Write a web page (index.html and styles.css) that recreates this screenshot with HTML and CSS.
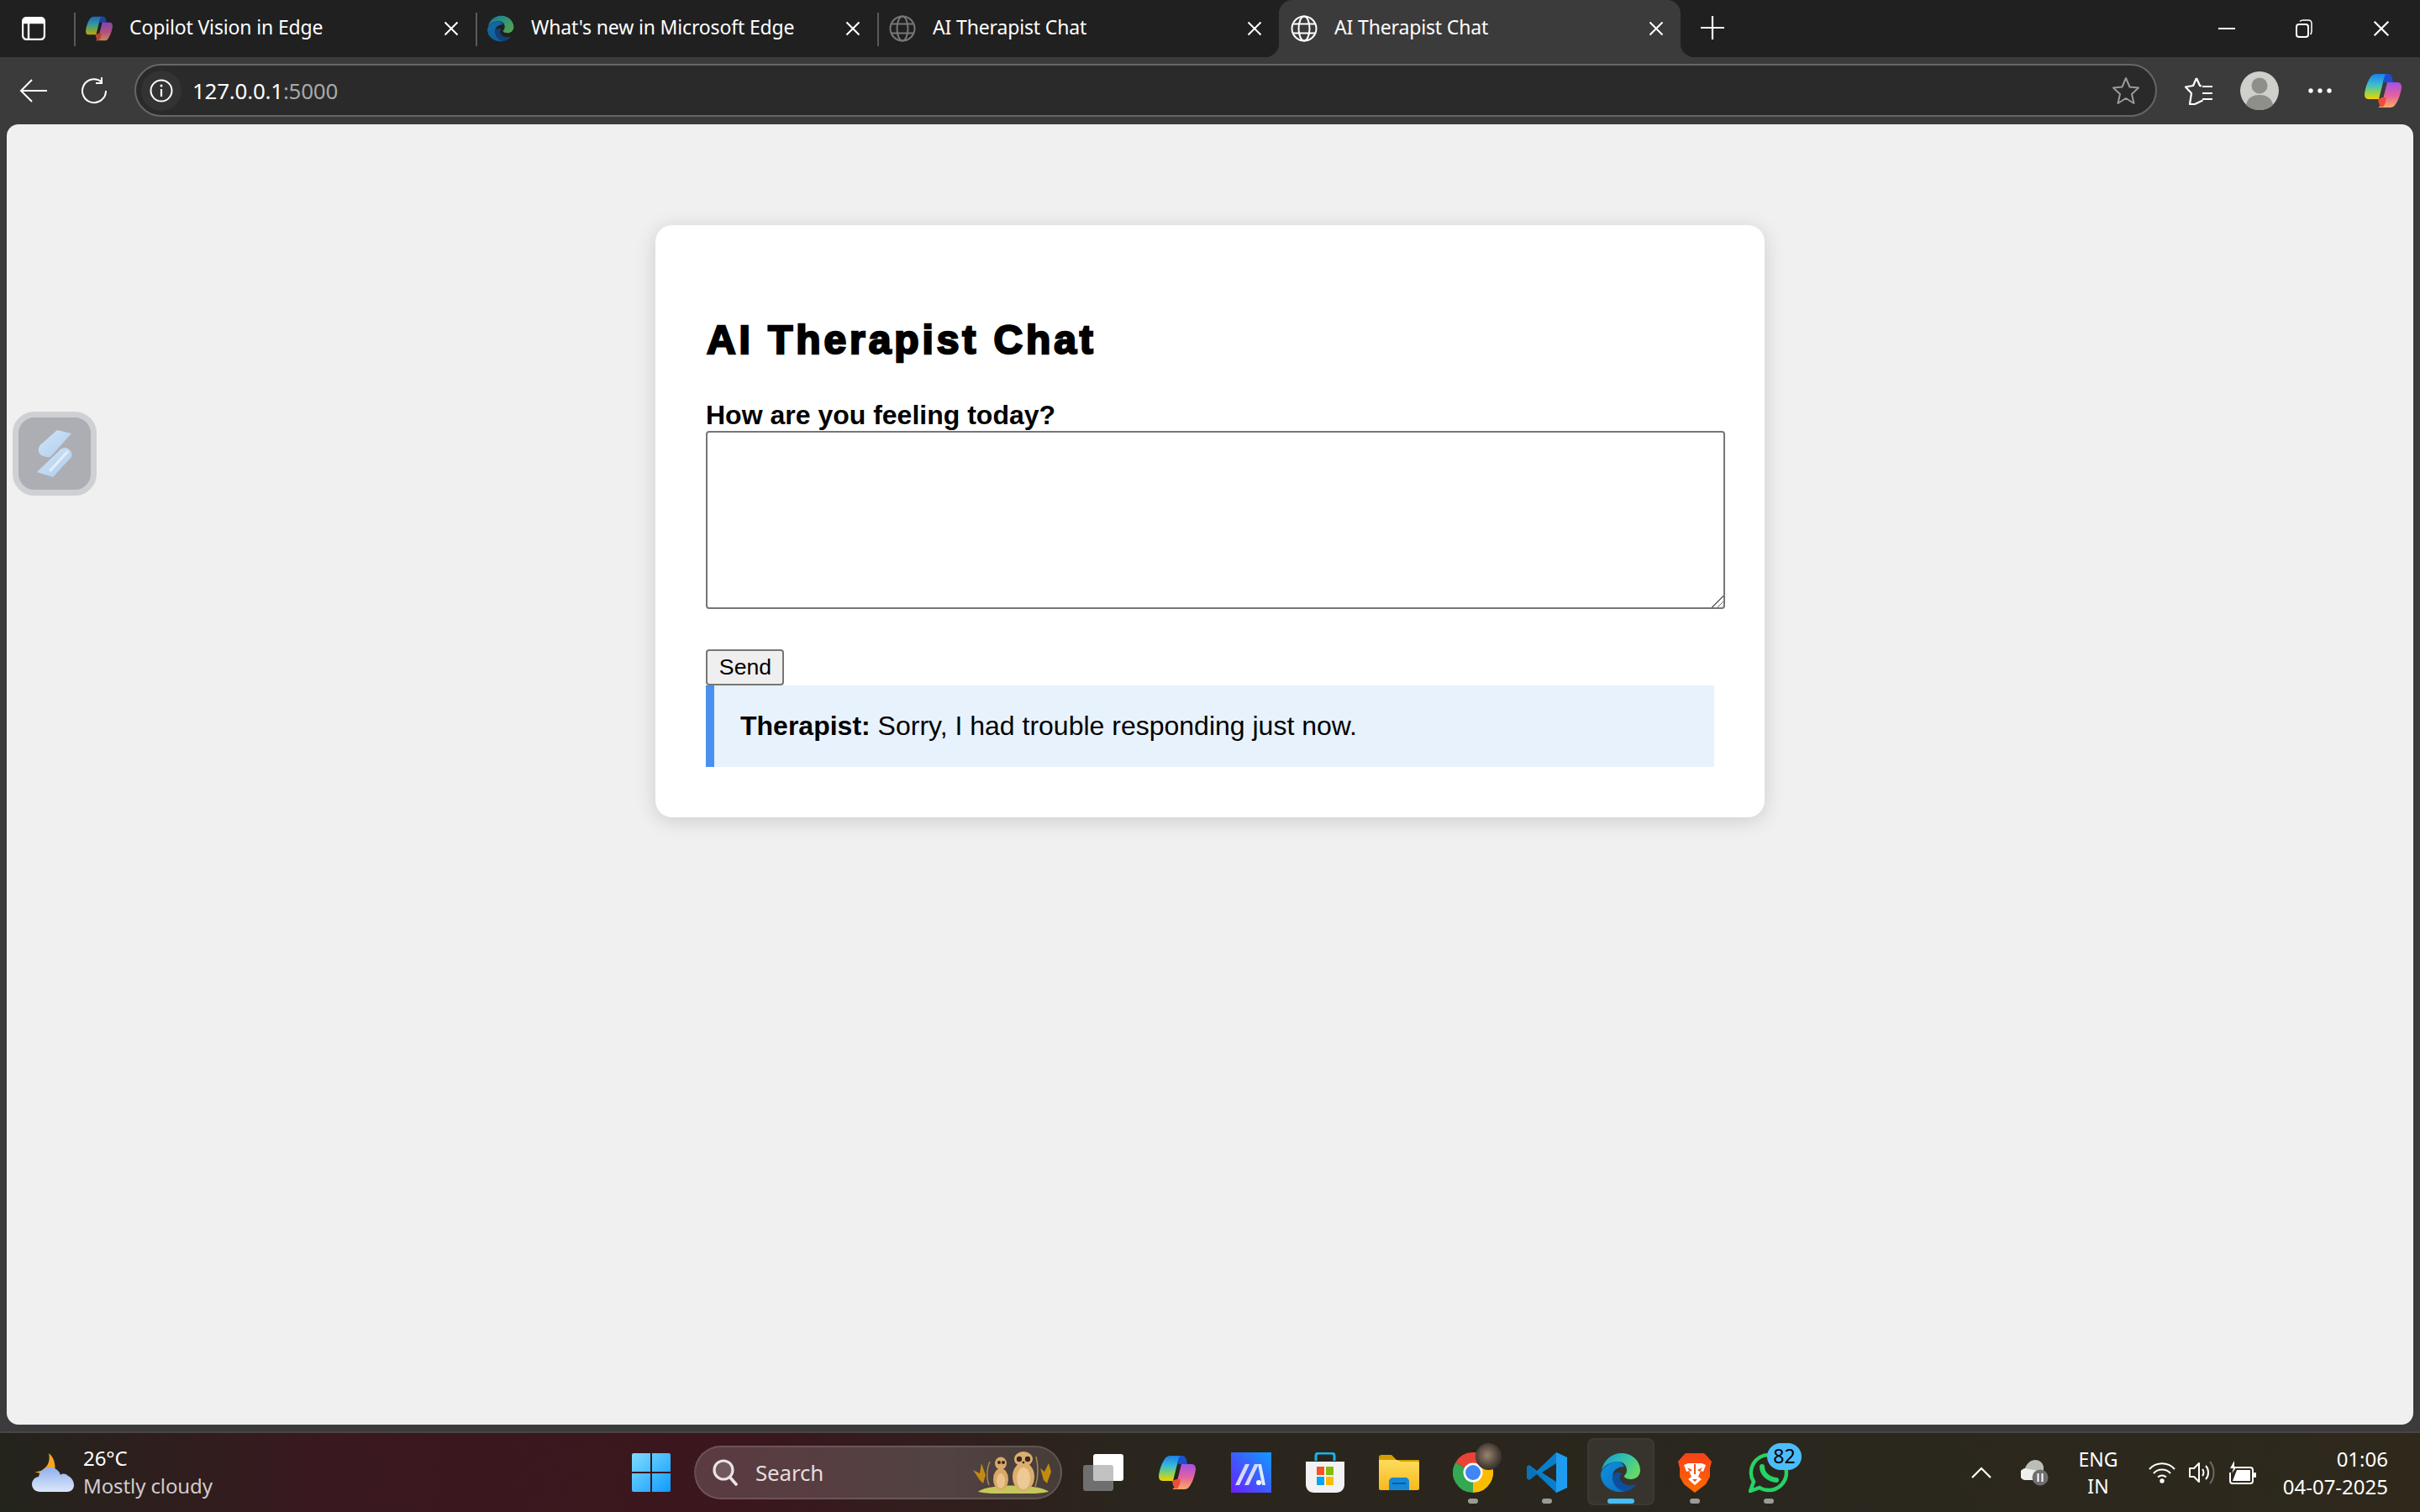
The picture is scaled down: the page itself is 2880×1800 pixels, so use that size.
FILE: index.html
```html
<!DOCTYPE html>
<html>
    <head>
        <meta charset="UTF-8">
        <title>AI Therapist Chat</title>
        <link rel="stylesheet" href="styles.css">
    </head>
    <body>
        <svg class="defs" width="0" height="0">
            <defs>
                <linearGradient id="copL" x1="0" y1="0" x2="0" y2="1">
                    <stop offset="0" stop-color="#1d7fe6"/><stop offset=".4" stop-color="#38b9d8"/><stop offset=".7" stop-color="#86d25c"/><stop offset="1" stop-color="#f7d000"/>
                </linearGradient>
                <linearGradient id="copR" x1="0" y1="0" x2="0" y2="1">
                    <stop offset="0" stop-color="#a252e6"/><stop offset=".5" stop-color="#e2609f"/><stop offset="1" stop-color="#fbab62"/>
                </linearGradient>
                <linearGradient id="edgeTop" x1="0" y1="0" x2="1" y2=".5">
                    <stop offset="0" stop-color="#1398d8"/><stop offset=".55" stop-color="#2fc0b0"/><stop offset="1" stop-color="#62d868"/>
                </linearGradient>
                <linearGradient id="edgeMid" x1="0" y1="0" x2="1" y2="1">
                    <stop offset="0" stop-color="#0e8fdc"/><stop offset="1" stop-color="#0b6fc4"/>
                </linearGradient>
                <linearGradient id="maBg" x1="1" y1="0" x2="0" y2="1">
                    <stop offset="0" stop-color="#0f9bff"/><stop offset="1" stop-color="#6a1fff"/>
                </linearGradient>
                <linearGradient id="winBlue" x1="0" y1="0" x2="1" y2="1">
                    <stop offset="0" stop-color="#7fdcff"/><stop offset="1" stop-color="#0f9bff"/>
                </linearGradient>
                <linearGradient id="braveBg" x1="0" y1="0" x2="0" y2="1">
                    <stop offset="0" stop-color="#f8401a"/><stop offset="1" stop-color="#ff6a00"/>
                </linearGradient>
                <linearGradient id="cloud" x1="0" y1="0" x2="0" y2="1">
                    <stop offset="0" stop-color="#8fb0ee"/><stop offset="1" stop-color="#dce8fa"/>
                </linearGradient>
                <linearGradient id="folder" x1="0" y1="0" x2="0" y2="1">
                    <stop offset="0" stop-color="#ffdc5c"/><stop offset="1" stop-color="#f6b81e"/>
                </linearGradient>
                <linearGradient id="slash" x1="0" y1="0" x2="1" y2="1">
                    <stop offset="0" stop-color="#d5e5f5"/><stop offset="1" stop-color="#a9cdf0"/>
                </linearGradient>
                <symbol id="copilot" viewBox="0 0 44 40">
                    <path fill="url(#copL)" d="M14 0H28C24 2 23 6 22 10L17 30H5C1 30 0 27 0 24C1 16 4 8 7 4C9 1 11 0 14 0Z"/>
                    <path fill="#1a4fd0" d="M26 0H28C31 0 32 2 33 5L34 10H22C23 5 24 1 26 0Z"/>
                    <path fill="url(#copR)" d="M27 10H39C43 10 44 13 44 16C43 24 40 32 37 36C35 39 33 40 30 40H16C20 38 21 34 22 30Z"/>
                    <path fill="#e8503c" d="M17 28H22C21 34 20 38 17 39.5C14 39 13 36 12 30Z" transform="translate(4 0)"/>
                </symbol>
                <symbol id="edge" viewBox="0 0 48 48">
                    <path fill="url(#edgeTop)" d="M1 22C3 9 13 1 25 1C38 1 47 11 47 21C47 28 42 32 36 32C32 32 29 31 28 29C27 27 31 27 31 21C31 15 26 11 21 11C12 11 4 15 1 22Z"/>
                    <path fill="url(#edgeMid)" d="M21 11C10 11 1 19 0 26C0 39 12 47 23 47C27 47 30 46 33 45C22 47 14 39 14 29C14 20 22 17 28 17C26 13 24 11 21 11Z"/>
                    <path fill="#0d4f9e" d="M14 29C14 39 22 47 31 46C36 45 40 42 42 38C36 40 30 40 26 36C22 33 22 28 25 25C20 23 14 24 14 29Z"/>
                </symbol>
                <symbol id="globe" viewBox="0 0 32 32">
                    <g fill="none" stroke="currentColor" stroke-width="2">
                        <circle cx="16" cy="16" r="14.5"/><ellipse cx="16" cy="16" rx="6.5" ry="14.5"/><path d="M3 10.5H29M3 21.5H29"/>
                    </g>
                </symbol>
                <symbol id="x" viewBox="0 0 18 18">
                    <path d="M1.5 1.5L16.5 16.5M16.5 1.5L1.5 16.5" fill="none" stroke="currentColor" stroke-width="2"/>
                </symbol>
            </defs>
        </svg>

        <div class="window">
            <!-- tab strip -->
            <div class="tabstrip">
                <div class="tabs-menu">
                    <svg width="28" height="28" viewBox="0 0 28 28"><rect x="1" y="1" width="26" height="26" rx="5" fill="none" stroke="#fff" stroke-width="2.4"/><path d="M1 7H27M8 7V27" fill="none" stroke="#fff" stroke-width="2.4"/><rect x="1" y="1" width="26" height="6" rx="3" fill="#fff"/></svg>
                </div>
                <div class="tab">
                    <svg class="favicon" viewBox="0 0 44 40"><use href="#copilot" opacity=".75"/></svg>
                    <span class="tab-title">Copilot Vision in Edge</span>
                    <svg class="tab-close"><use href="#x"/></svg>
                </div>
                <div class="tab">
                    <svg class="favicon" viewBox="0 0 48 48"><use href="#edge" opacity=".7"/></svg>
                    <span class="tab-title">What's new in Microsoft Edge</span>
                    <svg class="tab-close"><use href="#x"/></svg>
                </div>
                <div class="tab tab-before-active">
                    <svg class="favicon favicon-dim"><use href="#globe"/></svg>
                    <span class="tab-title">AI Therapist Chat</span>
                    <svg class="tab-close"><use href="#x"/></svg>
                </div>
                <div class="tab tab-active">
                    <svg class="favicon"><use href="#globe"/></svg>
                    <span class="tab-title">AI Therapist Chat</span>
                    <svg class="tab-close"><use href="#x"/></svg>
                </div>
                <div class="new-tab">
                    <svg width="28" height="28" viewBox="0 0 28 28"><path d="M14 0V28M0 14H28" stroke="#fff" stroke-width="2.2"/></svg>
                </div>
                <div class="win-controls">
                    <div class="win-btn"><svg width="20" height="20" viewBox="0 0 20 20"><path d="M0 10H20" stroke="#fff" stroke-width="2"/></svg></div>
                    <div class="win-btn"><svg width="20" height="22" viewBox="0 0 20 22"><rect x="1" y="6" width="14" height="15" rx="3" fill="none" stroke="#fff" stroke-width="2"/><path d="M5 2.5C6 1.5 7 1 9 1H15C17.500 1 19 2.500 19 5V14C19 16 18.500 17 17.500 18" fill="none" stroke="#fff" stroke-width="1.500"/></svg></div>
                    <div class="win-btn"><svg width="20" height="22"><use href="#x"/></svg></div>
                </div>
            </div>

            <!-- address bar -->
            <div class="toolbar">
                <div class="nav-btn nav-back">
                    <svg width="34" height="28" viewBox="0 0 34 28"><path d="M33 14H2M15 1L2 14L15 27" fill="none" stroke="#fff" stroke-width="2"/></svg>
                </div>
                <div class="nav-btn nav-reload">
                    <svg width="32" height="32" viewBox="0 0 32 32"><path d="M25 5.500A14 14 0 1 0 30 16" fill="none" stroke="#fff" stroke-width="2"/><path d="M25 0V7H18" fill="none" stroke="#fff" stroke-width="2"/></svg>
                </div>
                <div class="address">
                    <div class="site-info">
                        <svg width="28" height="28" viewBox="0 0 28 28"><circle cx="14" cy="14" r="12.500" fill="none" stroke="#fff" stroke-width="2"/><path d="M14 12V21" stroke="#fff" stroke-width="2.200"/><circle cx="14" cy="8" r="1.500" fill="#fff"/></svg>
                    </div>
                    <span class="url">127.0.0.1<span class="url-port">:5000</span></span>
                    <svg class="fav-star" width="34" height="34" viewBox="0 0 34 34"><path d="M17 2L21.500 12.500L32 13.500L24 21L26.500 32L17 26L7.500 32L10 21L2 13.500L12.500 12.500Z" fill="none" stroke="#9a9a9a" stroke-width="2" stroke-linejoin="round"/></svg>
                </div>
                <div class="tool-btn">
                    <svg width="34" height="34" viewBox="0 0 34 34"><path d="M14 2L18 11L20 11.500M12 33L21.500 28.500M14 2L10 11L1 12.500L8 20L6 33L12 33" fill="none" stroke="#fff" stroke-width="2.200" stroke-linejoin="round"/><path d="M21 12H33M21 20H33M21 27H33" stroke="#fff" stroke-width="2.200"/></svg>
                </div>
                <div class="tool-btn">
                    <svg width="46" height="46" viewBox="0 0 46 46"><circle cx="23" cy="23" r="23" fill="#cfcfcb"/><circle cx="23" cy="17" r="9.500" fill="#8e8e8a"/><path d="M7 40C9 31 15 28 23 28C31 28 37 31 39 40C35 44 29 46 23 46C17 46 11 44 7 40Z" fill="#8e8e8a"/></svg>
                </div>
                <div class="tool-btn">
                    <svg width="28" height="6" viewBox="0 0 28 6"><circle cx="3" cy="3" r="2.700" fill="#fff"/><circle cx="14" cy="3" r="2.700" fill="#fff"/><circle cx="25" cy="3" r="2.700" fill="#fff"/></svg>
                </div>
                <div class="tool-btn tool-copilot">
                    <svg width="44" height="40"><use href="#copilot"/></svg>
                </div>
            </div>

            <!-- page content -->
            <div class="viewport">
                <div class="side-widget">
                    <svg width="42" height="56" viewBox="0 0 42 56"><path d="M24 0L41 4L16 32C10 33 0 30 2 22C2 20 4 17 6 16Z" fill="url(#slash)"/><path d="M28 23C33 20 38 21 40 25C42 28 42 30 41 32L19 56L0 50Z" fill="url(#slash)"/><path d="M37 25L15 49" stroke="#e6eef8" stroke-width="3"/></svg>
                </div>
                <div class="card">
                    <h1>AI Therapist Chat</h1>
                    <label class="feeling-label" for="feeling">How are you feeling today?</label>
                    <textarea id="feeling" class="feeling-input"></textarea>
                    <button class="send-btn">Send</button>
                    <div class="response"><strong>Therapist:</strong> Sorry, I had trouble responding just now.</div>
                </div>
            </div>
            <div class="viewport-foot"></div>

            <!-- windows taskbar -->
            <div class="taskbar">
                <div class="weather">
                    <svg width="50" height="46" viewBox="0 0 50 46"><path d="M20 0C28 6 29 18 26 28L2 22C8 23 15 20 19 13C21 9 21 4 20 0Z" fill="#f5a623"/><path d="M10 46C4 46 0 42 0 37C0 32 4 28 8 28C9 22 14 17 21 17C28 17 33 21 34 26C36 24 40 24 43 27C47 29 50 33 50 38C50 43 46 46 42 46Z" fill="url(#cloud)"/></svg>
                    <div class="weather-text">
                        <span class="weather-temp">26°C</span>
                        <span class="weather-desc">Mostly cloudy</span>
                    </div>
                </div>
                <div class="task-center">
                    <div class="task-item">
                        <svg width="46" height="46" viewBox="0 0 46 46"><path d="M2 0H22V22H0V2A2 2 0 0 1 2 0ZM24 0H44A2 2 0 0 1 46 2V22H24ZM0 24H22V46H2A2 2 0 0 1 0 44ZM24 24H46V44A2 2 0 0 1 44 46H24Z" fill="url(#winBlue)"/></svg>
                    </div>
                    <div class="search">
                        <svg width="30" height="32" viewBox="0 0 30 32"><circle cx="13" cy="13" r="11" fill="rgba(255,255,255,.15)" stroke="#e8e4e6" stroke-width="3.200"/><path d="M21 22L28 30" stroke="#e8e4e6" stroke-width="3.600" stroke-linecap="round"/></svg>
                        <span class="search-text">Search</span>
                        <svg class="meerkats" width="96" height="50" viewBox="0 0 96 50">
                            <path d="M6 48C16 38 80 38 90 48C70 52 26 52 6 48Z" fill="#c5c75a"/>
                            <path d="M8 34L0 22L8 26L10 14L15 28L12 38ZM84 34L80 20L85 24L90 14L93 24L88 38Z" fill="#c28a12"/>
                            <path d="M19 40C15 30 17 18 20 12M74 42C78 30 78 18 75 6" fill="none" stroke="#a58a52" stroke-width="1.500"/>
                            <ellipse cx="33" cy="33" rx="9" ry="13" fill="#d9a868"/>
                            <ellipse cx="33" cy="14" rx="7" ry="7.500" fill="#d9a868"/>
                            <ellipse cx="33" cy="35" rx="5" ry="9" fill="#e8c48c"/>
                            <circle cx="31" cy="13" r="2" fill="#3c2620"/><circle cx="36" cy="13" r="2" fill="#3c2620"/>
                            <ellipse cx="60" cy="30" rx="13" ry="17" fill="#dcae6e"/>
                            <ellipse cx="60" cy="32" rx="8" ry="13" fill="#ecca94"/>
                            <ellipse cx="60" cy="9" rx="11" ry="9" fill="#dcae6e"/>
                            <circle cx="55" cy="9" r="3.200" fill="#3c2620"/><circle cx="65" cy="9" r="3.200" fill="#3c2620"/>
                            <circle cx="60" cy="13" r="1.300" fill="#2a1a14"/>
                        </svg>
                    </div>
                    <div class="task-item">
                        <svg width="48" height="44" viewBox="0 0 48 44"><rect x="0" y="13" width="36" height="31" rx="3" fill="#6f6f6f"/><rect x="12" y="0" width="36" height="32" rx="3" fill="#fff"/><path d="M12 13H33A3 3 0 0 1 36 16V32H15A3 3 0 0 1 12 29Z" fill="#c2c2c2"/></svg>
                    </div>
                    <div class="task-item">
                        <svg width="44" height="40"><use href="#copilot"/></svg>
                    </div>
                    <div class="task-item">
                        <svg width="48" height="48" viewBox="0 0 48 48"><rect width="48" height="48" fill="url(#maBg)"/><path d="M5 39L17 14H22L10 39ZM16 39L28 14H33L21 39Z" fill="#d8d8f8"/><path d="M32 14H36L41 39H37Z" fill="#d8ecff"/><circle cx="33" cy="36" r="3" fill="#fff"/></svg>
                    </div>
                    <div class="task-item">
                        <svg width="46" height="48" viewBox="0 0 46 48"><path d="M12 10V4C12 2 13 1 15 1H31C33 1 34 2 34 4V10" fill="none" stroke="#18b4e8" stroke-width="3"/><path d="M0 11H46V38C46 44 42 48 36 48H10C4 48 0 44 0 38Z" fill="#f2f2f2"/><rect x="13" y="17" width="9" height="10" fill="#f35325"/><rect x="24" y="17" width="9" height="10" fill="#81bc06"/><rect x="13" y="29" width="9" height="10" fill="#05a6f0"/><rect x="24" y="29" width="9" height="10" fill="#ffba08"/></svg>
                    </div>
                    <div class="task-item">
                        <svg width="48" height="42" viewBox="0 0 48 42"><path d="M0 3C0 1 1 0 3 0H15L21 6H48V12H0Z" fill="#d89e00"/><path d="M0 6H21L26 8H46C47 8 48 9 48 10V40C48 41 47 42 46 42H2C1 42 0 41 0 40Z" fill="url(#folder)"/><path d="M12 42V32C12 29 14 27 17 27H31C34 27 36 29 36 32V42Z" fill="#1488d8"/><rect x="16" y="33" width="16" height="2" fill="#0a5a9c"/></svg>
                    </div>
                    <div class="task-item task-running">
                        <svg width="48" height="48" viewBox="0 0 48 48"><path d="M24 24L3.200 12A24 24 0 0 1 44.800 12Z" fill="#e94335"/><path d="M24 24L44.800 12A24 24 0 0 1 24 48Z" fill="#fbbc04"/><path d="M24 24L24 48A24 24 0 0 1 3.200 12Z" fill="#34a853"/><circle cx="24" cy="24" r="11.500" fill="#fff"/><circle cx="24" cy="24" r="9" fill="#4285f4"/></svg>
                        <span class="chrome-profile"></span>
                    </div>
                    <div class="task-item task-running">
                        <svg width="48" height="48" viewBox="0 0 48 48"><path d="M35 0L48 6V42L35 48L12 26L3 33L0 31V17L3 15L12 22Z" fill="#0a7ec8"/><path d="M35 0L48 6V42L35 48Z" fill="#1f9cf0"/><path d="M35 13V35L18 24Z" fill="#2a2820"/><path d="M3 15L35 48L12 26L3 33L0 31V17Z" fill="#0868ac" opacity=".5"/></svg>
                    </div>
                    <div class="task-item task-active">
                        <svg width="48" height="48"><use href="#edge"/></svg>
                    </div>
                    <div class="task-item task-running">
                        <svg width="40" height="47" viewBox="0 0 40 47"><path d="M9 0H31L35 4L40 10L38 18V28L33 37L20 47L7 37L2 28V18L0 10L5 4Z" fill="url(#braveBg)"/><path d="M7 14L12 12H28L33 14L30 22L27 21L24 28L28 31L20 38L12 31L16 28L13 21L10 22Z" fill="#fff"/><path d="M19 13H21V25H19ZM11 17L17 20L14 22ZM29 17L23 20L26 22ZM17 31H23L20 34Z" fill="#f2500f"/></svg>
                    </div>
                    <div class="task-item task-running">
                        <svg width="48" height="48" viewBox="0 0 48 48"><path d="M24 3A21 21 0 0 1 24 45C20 45 16 44 13 42L2 46L6 35A21 21 0 0 1 24 3Z" fill="none" stroke="#25d366" stroke-width="4.500"/><path d="M16 17C16 25 23 32 33 33" fill="none" stroke="#25d366" stroke-width="6" stroke-linecap="round"/></svg>
                        <span class="badge">82</span>
                    </div>
                </div>
                <div class="tray">
                    <div class="tray-icon tray-chevron">
                        <svg width="24" height="14" viewBox="0 0 24 14"><path d="M1 13L12 2L23 13" fill="none" stroke="#fff" stroke-width="2.200"/></svg>
                    </div>
                    <div class="tray-icon tray-cloud">
                        <svg width="34" height="34" viewBox="0 0 34 34"><path d="M7 26A7 7 0 0 1 5 12C7 6 12 2 17 2C22 2 26 5 27 10V26Z" fill="#bdbdb8"/><path d="M7 26A7 7 0 0 1 5 12L25 16V26Z" fill="#efefeb"/><circle cx="23" cy="23" r="9.500" fill="#6f6f6f"/><path d="M20.500 18V28M25.500 18V28" stroke="#fff" stroke-width="2"/></svg>
                    </div>
                    <div class="tray-lang"><span>ENG</span><span>IN</span></div>
                    <div class="tray-icon tray-sys">
                        <svg width="32" height="26" viewBox="0 0 32 26"><path d="M1 9C9 0 23 0 31 9M6 14C11 8 21 8 26 14M11 18.500C14 16 18 16 21 18.500" fill="none" stroke="#fff" stroke-width="2"/><circle cx="16" cy="23" r="2.700" fill="#fff"/></svg>
                    </div>
                    <div class="tray-icon tray-sys">
                        <svg width="32" height="28" viewBox="0 0 32 28"><path d="M1 9H6L12 3V25L6 19H1Z" fill="none" stroke="#fff" stroke-width="2" stroke-linejoin="round"/><path d="M16 10C18 12 18 16 16 18M20 6C24 10 24 18 20 22" fill="none" stroke="#fff" stroke-width="2"/><path d="M25 1C31 8 31 20 25 27" fill="none" stroke="#6c6a64" stroke-width="2"/></svg>
                    </div>
                    <div class="tray-icon tray-sys">
                        <svg width="32" height="28" viewBox="0 0 32 28"><path d="M8 8H25C27 8 28 9 28 11V24C28 26 27 27 25 27H4C2 27 1 26 1 24V14" fill="none" stroke="#fff" stroke-width="2"/><path d="M9 11H25V24H4Z" fill="#fff"/><rect x="29" y="14" width="3" height="6" rx="1" fill="#fff"/><path d="M6 0L1 9H5L3 15L9 7H6Z" fill="#fff"/></svg>
                    </div>
                    <div class="clock"><span>01:06</span><span>04-07-2025</span></div>
                </div>
            </div>
        </div>
    </body>
</html>
```

FILE: styles.css
```css
html, body{
    margin: 0;
    padding: 0;
    height: 100%;
    background: #3b3b3b;
}
.defs{
    position: absolute;
}
.window{
    width: 2880px;
    height: 1800px;
    display: flex;
    flex-direction: column;
    overflow: hidden;
    font-family: "Noto Sans", sans-serif;
    color: #fff;
}

/* tab strip */
.tabstrip{
    height: 68px;
    flex: none;
    display: flex;
    align-items: stretch;
    background: #202020;
}
.tabs-menu{
    width: 88px;
    padding-left: 26px;
    box-sizing: border-box;
    display: flex;
    align-items: center;
}
.tab{
    width: 478px;
    flex: none;
    box-sizing: border-box;
    display: flex;
    align-items: center;
    padding: 0 20px 0 14px;
    position: relative;
}
.tab::before{
    content: "";
    position: absolute;
    left: 0;
    top: 15px;
    height: 40px;
    width: 2px;
    background: #5a5a5a;
}
.tab-active{
    background: #3b3b3b;
    border-radius: 16px 16px 0 0;
}
.tab-active::before, .tab-active::after{
    content: "";
    position: absolute;
    bottom: 0;
    top: auto;
    width: 16px;
    height: 16px;
    background: transparent;
}
.tab-active::before{
    left: -16px;
    border-bottom-right-radius: 16px;
    box-shadow: 6px 6px 0 2px #3b3b3b;
}
.tab-active::after{
    right: -16px;
    border-bottom-left-radius: 16px;
    box-shadow: -6px 6px 0 2px #3b3b3b;
}
.favicon{
    width: 32px;
    height: 32px;
    flex: none;
    color: #fff;
}
.favicon-dim{
    color: #777;
}
.tab-title{
    margin-left: 20px;
    font-size: 23px;
    white-space: nowrap;
    letter-spacing: -0.15px;
    padding-bottom: 4px;
}
.tab-close{
    width: 18px;
    height: 18px;
    margin-left: auto;
    color: #fff;
}
.new-tab{
    width: 62px;
    margin-left: 7px;
    padding-bottom: 2px;
    display: flex;
    align-items: center;
    justify-content: center;
}
.win-controls{
    margin-left: auto;
    display: flex;
}
.win-btn{
    width: 92px;
    display: flex;
    align-items: center;
    justify-content: center;
    color: #fff;
}

/* toolbar */
.toolbar{
    height: 80px;
    flex: none;
    display: flex;
    align-items: center;
    background: #3b3b3b;
    padding-left: 23px;
    box-sizing: border-box;
}
.nav-btn{
    display: flex;
    align-items: center;
}
.nav-back{
    width: 73px;
}
.nav-reload{
    width: 64px;
}
.address{
    width: 2407px;
    height: 63px;
    margin-top: -1px;
    box-sizing: border-box;
    border: 2px solid #666;
    border-radius: 32px;
    background: #2a2a2a;
    display: flex;
    align-items: center;
    padding: 0 18px 0 6px;
}
.site-info{
    width: 48px;
    height: 48px;
    border-radius: 50%;
    background: #333;
    display: flex;
    align-items: center;
    justify-content: center;
}
.url{
    margin-left: 13px;
    font-size: 26px;
    letter-spacing: -0.25px;
}
.url-port{
    color: #a8a8a8;
}
.fav-star{
    margin-left: auto;
}
.tool-btn{
    width: 72px;
    display: flex;
    align-items: center;
    justify-content: center;
}
.address + .tool-btn{
    margin-left: 14px;
}
.tool-copilot{
    margin-left: 3px;
}

/* page */
.viewport{
    height: 1548px;
    flex: none;
    margin: 0 8px;
    background: #f0f0f0;
    border-radius: 14px;
    position: relative;
    box-sizing: border-box;
    padding-top: 120px;
    font-family: "Liberation Sans", Arial, sans-serif;
    color: #000;
}
.viewport-foot{
    height: 8px;
    flex: none;
}
.side-widget{
    position: absolute;
    left: 7px;
    top: 342px;
    width: 100px;
    height: 100px;
    box-sizing: border-box;
    border: 7px solid #cfd0d4;
    border-radius: 26px;
    background: #adaeb3;
    display: flex;
    align-items: center;
    justify-content: center;
}
.card{
    width: 1320px;
    box-sizing: border-box;
    margin-left: 772px;
    padding: 60px;
    background: #fff;
    border-radius: 20px;
    box-shadow: 0 4px 24px rgba(0,0,0,0.15);
}
.card h1{
    margin: 49px 0 43px;
    padding-left: 1px;
    font-size: 48px;
    line-height: 56px;
    letter-spacing: 3.9px;
    font-weight: bold;
    -webkit-text-stroke: 2.4px #000;
}
.feeling-label{
    display: block;
    font-size: 32px;
    font-weight: bold;
    line-height: 37px;
}
.feeling-input{
    display: block;
    width: 1213px;
    height: 212px;
    box-sizing: border-box;
    margin: 0 0 48px;
    border: 2px solid #767676;
    border-radius: 4px;
    background: #fff;
}
.feeling-input::-webkit-resizer{
    background: linear-gradient(135deg, transparent 52%, #666 52%, #666 58%, transparent 58%, transparent 74%, #666 74%, #666 80%, transparent 80%);
}
.send-btn{
    display: block;
    width: 93px;
    height: 43px;
    padding: 0 0 0 1px;
    border: 2px solid #767676;
    border-radius: 4px;
    background: #efefef;
    font-family: "Liberation Sans", Arial, sans-serif;
    font-size: 26.67px;
    color: #000;
}
.response{
    height: 97px;
    box-sizing: border-box;
    border-left: 10px solid #4a90f0;
    background: #e8f2fc;
    padding: 0 30px 0 31px;
    font-size: 32px;
    line-height: 97px;
}

/* taskbar */
.taskbar{
    height: 96px;
    flex: none;
    box-sizing: border-box;
    border-top: 2px solid #4a4444;
    display: flex;
    align-items: stretch;
    background: linear-gradient(90deg, #23241c 0%, #3a181f 14%, #3b161d 30%, #2a251d 46%, #2a271e 75%, #2f291c 100%);
}
.weather{
    width: 731px;
    flex: none;
    box-sizing: border-box;
    padding-left: 38px;
    display: flex;
    align-items: center;
}
.weather-text{
    display: flex;
    flex-direction: column;
    margin-left: 11px;
    margin-top: -3px;
    letter-spacing: -0.1px;
}
.weather-temp, .weather-desc{
    font-size: 24px;
    line-height: 33px;
}
.weather-desc{
    color: #d2cccc;
}
.task-center{
    display: flex;
    align-items: stretch;
}
.task-item{
    width: 88px;
    flex: none;
    display: flex;
    align-items: center;
    justify-content: center;
    position: relative;
}
.task-running::after, .task-active::after{
    content: "";
    position: absolute;
    left: 38px;
    bottom: 10px;
    width: 12px;
    height: 6px;
    border-radius: 3px;
    background: #9a9a96;
}
.task-active::before{
    content: "";
    position: absolute;
    left: 4px;
    top: 6px;
    width: 80px;
    height: 80px;
    box-sizing: border-box;
    border: 2px solid #3d3a33;
    border-radius: 8px;
    background: #36342d;
    z-index: 0;
}
.task-active svg{
    position: relative;
    z-index: 1;
}
.task-active::after{
    left: 28px;
    width: 32px;
    background: #46bcf5;
    z-index: 1;
}
.search{
    width: 438px;
    height: 64px;
    flex: none;
    align-self: center;
    margin: 0 5px 0 7px;
    box-sizing: border-box;
    border: 2px solid rgba(255,255,255,0.12);
    border-radius: 32px;
    background: linear-gradient(90deg, rgba(255,255,255,0.16), rgba(255,255,255,0.16) 70%, rgba(255,255,255,0.12));
    display: flex;
    align-items: center;
    padding: 0 8px 0 20px;
}
.search-text{
    margin-left: 21px;
    font-size: 26px;
    color: #e4dcde;
    letter-spacing: -0.2px;
}
.meerkats{
    margin-left: auto;
}
.chrome-profile{
    position: absolute;
    left: 47px;
    top: 12px;
    width: 31px;
    height: 32px;
    border-radius: 50%;
    background: radial-gradient(circle at 45% 45%, #9a8470, #4a4038 55%, #15161a);
}
.badge{
    position: absolute;
    left: 42px;
    top: 12px;
    width: 41px;
    height: 32px;
    border-radius: 16px;
    background: #4cbcfa;
    color: #000;
    font-size: 23px;
    line-height: 31px;
    text-align: center;
}
.tray{
    margin-left: auto;
    display: flex;
    align-items: center;
    padding-right: 38px;
}
.tray-icon{
    display: flex;
    align-items: center;
    justify-content: center;
}
.tray-chevron{
    width: 24px;
}
.tray-cloud{
    width: 34px;
    margin-left: 35px;
}
.tray-lang{
    width: 60px;
    margin-left: 28px;
    display: flex;
    flex-direction: column;
    align-items: center;
    font-size: 23px;
    line-height: 32px;
}
.tray-sys{
    width: 48px;
}
.tray-lang + .tray-sys{
    margin-left: 22px;
}
.clock{
    width: 128px;
    margin-left: 21px;
    display: flex;
    flex-direction: column;
    align-items: flex-end;
    font-size: 24px;
    line-height: 33px;
}
```
